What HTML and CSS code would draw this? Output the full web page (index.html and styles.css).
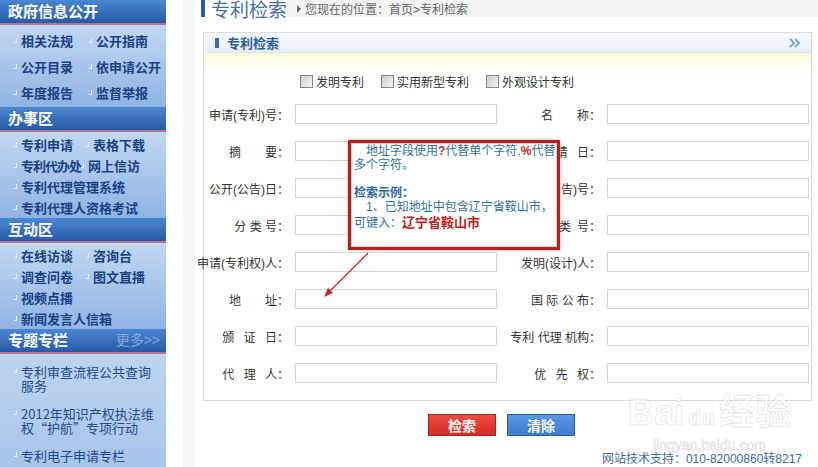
FILE: index.html
```html
<!DOCTYPE html>
<html lang="zh-CN">

<head>
  <meta charset="utf-8">
  <title>专利检索</title>
  <link rel="stylesheet" href="styles.css">
</head>

<body>
  <div class="page">
    <!-- 左侧栏目导航 -->
    <div class="side-nav">
      <div class="nav-title">政府信息公开</div>
      <div class="nav-body nav-body-open">
        <div class="nav-row"><a class="nav-item">相关法规</a><a class="nav-item">公开指南</a></div>
        <div class="nav-row"><a class="nav-item">公开目录</a><a class="nav-item">依申请公开</a></div>
        <div class="nav-row"><a class="nav-item">年度报告</a><a class="nav-item">监督举报</a></div>
      </div>

      <div class="nav-title">办事区</div>
      <div class="nav-body">
        <div class="nav-row"><a class="nav-item">专利申请</a><a class="nav-item">表格下载</a></div>
        <div class="nav-row"><a class="nav-item nav-item-tight">专利代办处</a><a class="nav-item">网上信访</a></div>
        <div class="nav-row"><a class="nav-item">专利代理管理系统</a></div>
        <div class="nav-row"><a class="nav-item">专利代理人资格考试</a></div>
      </div>

      <div class="nav-title">互动区</div>
      <div class="nav-body">
        <div class="nav-row"><a class="nav-item">在线访谈</a><a class="nav-item">咨询台</a></div>
        <div class="nav-row"><a class="nav-item">调查问卷</a><a class="nav-item">图文直播</a></div>
        <div class="nav-row"><a class="nav-item">视频点播</a></div>
        <div class="nav-row"><a class="nav-item">新闻发言人信箱</a></div>
      </div>

      <div class="nav-title">专题专栏<a class="nav-more">更多&gt;&gt;</a></div>
      <div class="topic-list">
        <a class="topic-item"><span class="topic-text">专利审查流程公共查询服务</span></a>
        <a class="topic-item"><span class="topic-text">2012年知识产权执法维权“护航”专项行动</span></a>
        <a class="topic-item"><span class="topic-text">专利电子申请专栏</span></a>
      </div>
    </div>

    <div class="side-gap"></div>

    <!-- 主内容 -->
    <div class="main">
      <div class="page-head">
        <h2 class="page-title">专利检索</h2>
        <div class="crumbs"><span class="crumb-arrow"></span>您现在的位置：首页&gt;专利检索</div>
      </div>

      <div class="search-panel">
        <div class="panel-head">
          <span class="panel-title">专利检索</span>
          <svg class="panel-more" width="12" height="10" viewBox="0 0 12 10">
            <path d="M1 1 L5 5 L1 9 M6 1 L10 5 L6 9" fill="none" stroke="#7ea6d4" stroke-width="2" />
          </svg>
        </div>

        <div class="panel-body">
          <div class="type-row">
            <label class="type-check"><input type="checkbox">发明专利</label>
            <label class="type-check"><input type="checkbox">实用新型专利</label>
            <label class="type-check"><input type="checkbox">外观设计专利</label>
          </div>

          <div class="field-grid">
            <label class="field-label">申请(专利)号：</label><input class="field-input" type="text">
            <label class="field-label">名&emsp;&emsp;称：</label><input class="field-input" type="text">

            <label class="field-label">摘&emsp;&emsp;要：</label><input class="field-input" type="text">
            <label class="field-label">申&ensp;&nbsp;请&ensp;&nbsp;日：</label><input class="field-input" type="text">

            <label class="field-label">公开(公告)日：</label><input class="field-input" type="text">
            <label class="field-label">公开(公告)号：</label><input class="field-input" type="text">

            <label class="field-label">分&nbsp;类&nbsp;号：</label><input class="field-input" type="text">
            <label class="field-label">主&ensp;分&ensp;类&ensp;号：</label><input class="field-input" type="text">

            <label class="field-label">申请(专利权)人：</label><input class="field-input" type="text">
            <label class="field-label">发明(设计)人：</label><input class="field-input" type="text">

            <label class="field-label">地&emsp;&emsp;址：</label><input class="field-input" type="text">
            <label class="field-label">国&nbsp;际&nbsp;公&nbsp;布：</label><input class="field-input" type="text">

            <label class="field-label">颁&ensp;&nbsp;证&ensp;&nbsp;日：</label><input class="field-input" type="text">
            <label class="field-label">专利&nbsp;代理&nbsp;机构：</label><input class="field-input" type="text">

            <label class="field-label">代&ensp;&nbsp;理&ensp;&nbsp;人：</label><input class="field-input" type="text">
            <label class="field-label">优&ensp;&nbsp;先&ensp;&nbsp;权：</label><input class="field-input" type="text">
          </div>
        </div>

        <!-- 地址字段提示 -->
        <div class="tip-box">
          <div class="tip-inner">
            <p class="tip-line tip-indent">地址字段使用<b class="tip-red">?</b>代替单个字符,<b class="tip-red">%</b>代替</p>
            <p class="tip-line">多个字符。</p>
            <p class="tip-line">&nbsp;</p>
            <p class="tip-line tip-strong">检索示例：</p>
            <p class="tip-line tip-indent">1、已知地址中包含辽宁省鞍山市，</p>
            <p class="tip-line tip-last">可键入：<b class="tip-key">辽宁省鞍山市</b></p>
          </div>
        </div>
        <svg class="tip-arrow" width="200" height="280" viewBox="0 0 200 280">
          <line x1="164" y1="220" x2="124" y2="260" stroke="#c62222" stroke-width="1.2" />
          <polygon points="120,264 129,260 124,255" fill="#c62222" />
        </svg>
      </div>

      <div class="btn-row">
        <button class="btn btn-search">检索</button>
        <button class="btn btn-clear">清除</button>
      </div>

      <div class="site-footer">网站技术支持：010-82000860转8217</div>
    </div>
  </div>

  <div class="watermark">
    <div class="wm-logo">Bai<span class="wm-du">du</span>经验</div>
    <div class="wm-url">jingyan.baidu.com</div>
  </div>
</body>

</html>
```

FILE: styles.css
```css
/* Page base */
html,
body {
  margin: 0;
  padding: 0;
  height: 100%;
}

body {
  background-color: #fff;
  font-family: "Liberation Sans", "Noto Sans CJK SC", sans-serif;
  font-size: 12px;
  color: #333;
  overflow: hidden;
  position: relative;
}

a {
  text-decoration: none;
  cursor: pointer;
}

.page {
  display: flex;
  min-height: 100vh;
}

/* Left navigation */
.side-nav {
  width: 166px;
  flex-shrink: 0;
  display: flex;
  flex-direction: column;
}

.nav-title {
  height: 23px;
  line-height: 23px;
  padding: 0 6px 0 8px;
  font-size: 15px;
  font-weight: bold;
  color: #fff;
  background: linear-gradient(#4a86d2, #2859a8);
  border-bottom: 2px solid #b9728f;
}

.nav-more {
  float: right;
  font-size: 14px;
  font-weight: normal;
  color: #86aae0;
}

.nav-body {
  padding: 2px 0 0 14px;
  background: linear-gradient(#c1d7f2, #8fb4e4);
}

.nav-body .nav-row {
  display: flex;
  height: 21px;
  align-items: center;
}

.nav-body-open {
  padding-bottom: 2px;
}

.nav-body-open .nav-row {
  height: 26px;
}

.nav-item {
  display: flex;
  align-items: center;
  min-width: 72px;
  font-size: 13px;
  font-weight: bold;
  color: #1a4283;
  white-space: nowrap;
}

.nav-body-open .nav-item {
  min-width: 75px;
}

.nav-item-tight {
  letter-spacing: -1px;
  min-width: 65px;
}

.nav-item::before,
.topic-item::before {
  content: "";
  width: 2px;
  height: 4px;
  margin-right: 4px;
  flex-shrink: 0;
  border-right: 1px solid #f0f5fc;
  border-bottom: 1px solid #f0f5fc;
  opacity: 0.9;
}

.topic-list {
  flex: 1;
  padding: 11px 10px 0 14px;
  background: linear-gradient(#bdd4f0, #a5c3ea);
}

.topic-item {
  display: flex;
  align-items: flex-start;
  margin-bottom: 14px;
  font-size: 13px;
  line-height: 14px;
  color: #1f4b8b;
}

.topic-item::before {
  margin-top: 3px;
}

.topic-text {
  width: 135px;
  font-family: "Noto Sans CJK SC", sans-serif;
}

/* thin grey strip between nav and content */
.side-gap {
  width: 34px;
  flex-shrink: 0;
  background: linear-gradient(to right, #fff 17px, #f5f5f5 17px, #f5f5f5 29px, #fff 29px);
}

/* Main content */
.main {
  flex: 1;
  min-width: 0;
}

.page-head {
  display: flex;
  align-items: flex-start;
  height: 18px;
  margin-left: 1px;
}

.page-title {
  margin: 0;
  height: 17px;
  padding-left: 6px;
  border-left: 4px solid #2d5ca3;
  font-size: 19px;
  font-weight: normal;
  line-height: 21px;
  color: #4b6fa4;
  white-space: nowrap;
}

.crumbs {
  flex: 1;
  display: flex;
  align-items: center;
  height: 17px;
  padding-left: 10px;
  background-color: #f2f2f2;
  font-size: 12px;
  color: #666;
  white-space: nowrap;
}

.crumb-arrow {
  width: 0;
  height: 0;
  margin-right: 4px;
  border-left: 4px solid #6a6a6a;
  border-top: 4px solid transparent;
  border-bottom: 4px solid transparent;
}

/* Search panel */
.search-panel {
  position: relative;
  margin: 14px 6px 0 3px;
  border: 1px solid #dcdcdc;
}

.panel-head {
  display: flex;
  align-items: center;
  height: 19px;
  padding: 0 10px 0 11px;
  background: linear-gradient(#f6f9fd, #e7eff8);
  border-bottom: 1px solid #d9e3ef;
}

.panel-title {
  display: flex;
  align-items: center;
  font-size: 13px;
  font-weight: bold;
  color: #2e5c9b;
}

.panel-title::before {
  content: "";
  width: 4px;
  height: 10px;
  margin-right: 8px;
  background-color: #3b69aa;
}

.panel-more {
  margin-left: auto;
}

.panel-body {
  padding: 20px 0 17px;
  background: linear-gradient(#fffbe0, #fff 24px);
}

.type-row {
  display: flex;
  height: 16px;
  padding-left: 96px;
  gap: 17px;
}

.type-check {
  display: flex;
  align-items: center;
  font-size: 12px;
  color: #333;
}

.type-check input {
  -webkit-appearance: none;
  appearance: none;
  width: 13px;
  height: 13px;
  margin: 0 3px 0 0;
  border: 1px solid #858585;
  background: linear-gradient(135deg, #cbcbcb, #f7f7f7);
}

.field-grid {
  display: grid;
  grid-template-columns: 91px 202px 110px 202px;
  grid-auto-rows: 20px;
  row-gap: 17px;
  margin-top: 15px;
}

.field-label {
  display: flex;
  align-items: center;
  justify-content: flex-end;
  padding-right: 6px;
  font-size: 12px;
  color: #333;
  white-space: nowrap;
}

.field-input {
  box-sizing: border-box;
  width: 202px;
  height: 20px;
  margin: 0;
  padding: 0 3px;
  border: 1px solid #d4d4d4;
  background-color: #fff;
}

/* Address tip */
.tip-box {
  position: absolute;
  left: 144px;
  top: 107px;
  box-sizing: border-box;
  width: 212px;
  height: 110px;
  border: 3px solid #b3211e;
  box-shadow: 0 0 2px rgba(190, 40, 40, 0.6);
  background-color: #fff;
}

.tip-inner {
  height: 100%;
  box-sizing: border-box;
  padding: 0 0 0 2px;
  border: 1px solid #cfcfcf;
}

.tip-line {
  margin: 0;
  font-size: 12px;
  line-height: 14px;
  color: #2f71a6;
  white-space: nowrap;
}

.tip-indent {
  text-indent: 12px;
}

.tip-strong {
  font-weight: bold;
  color: #2b6aa6;
}

.tip-last {
  line-height: 17px;
}

.tip-red {
  color: #c22a2a;
}

.tip-key {
  font-size: 13px;
  color: #c0201f;
}

.tip-arrow {
  position: absolute;
  left: 0;
  top: 0;
  pointer-events: none;
}

/* Buttons */
.btn-row {
  display: flex;
  gap: 11px;
  margin-top: 13px;
  padding-left: 228px;
}

.btn {
  width: 68px;
  height: 22px;
  padding: 0;
  font-family: "Noto Sans CJK SC", sans-serif;
  font-size: 14px;
  font-weight: bold;
  line-height: 20px;
  color: #fff;
  cursor: pointer;
}

.btn-search {
  background: linear-gradient(#ef4c42, #d62c26);
  border: 1px solid #9c2b26;
}

.btn-clear {
  background: linear-gradient(#5798e2, #3c7ecf);
  border: 1px solid #2d5d98;
}

.site-footer {
  margin-top: 15px;
  padding-right: 16px;
  text-align: right;
  font-size: 12px;
  line-height: 16px;
  color: #3b6c9c;
}

/* faint site watermark */
.watermark {
  position: absolute;
  left: 628px;
  top: 393px;
  pointer-events: none;
  color: rgba(255, 255, 255, 0.6);
  -webkit-text-stroke: 1px rgba(170, 170, 170, 0.3);
  text-align: center;
}

.wm-logo {
  font-size: 36px;
  line-height: 40px;
  font-weight: bold;
}

.wm-du {
  font-size: 22px;
  margin: 0 4px;
}

.wm-url {
  font-size: 14px;
  line-height: 14px;
}
```
